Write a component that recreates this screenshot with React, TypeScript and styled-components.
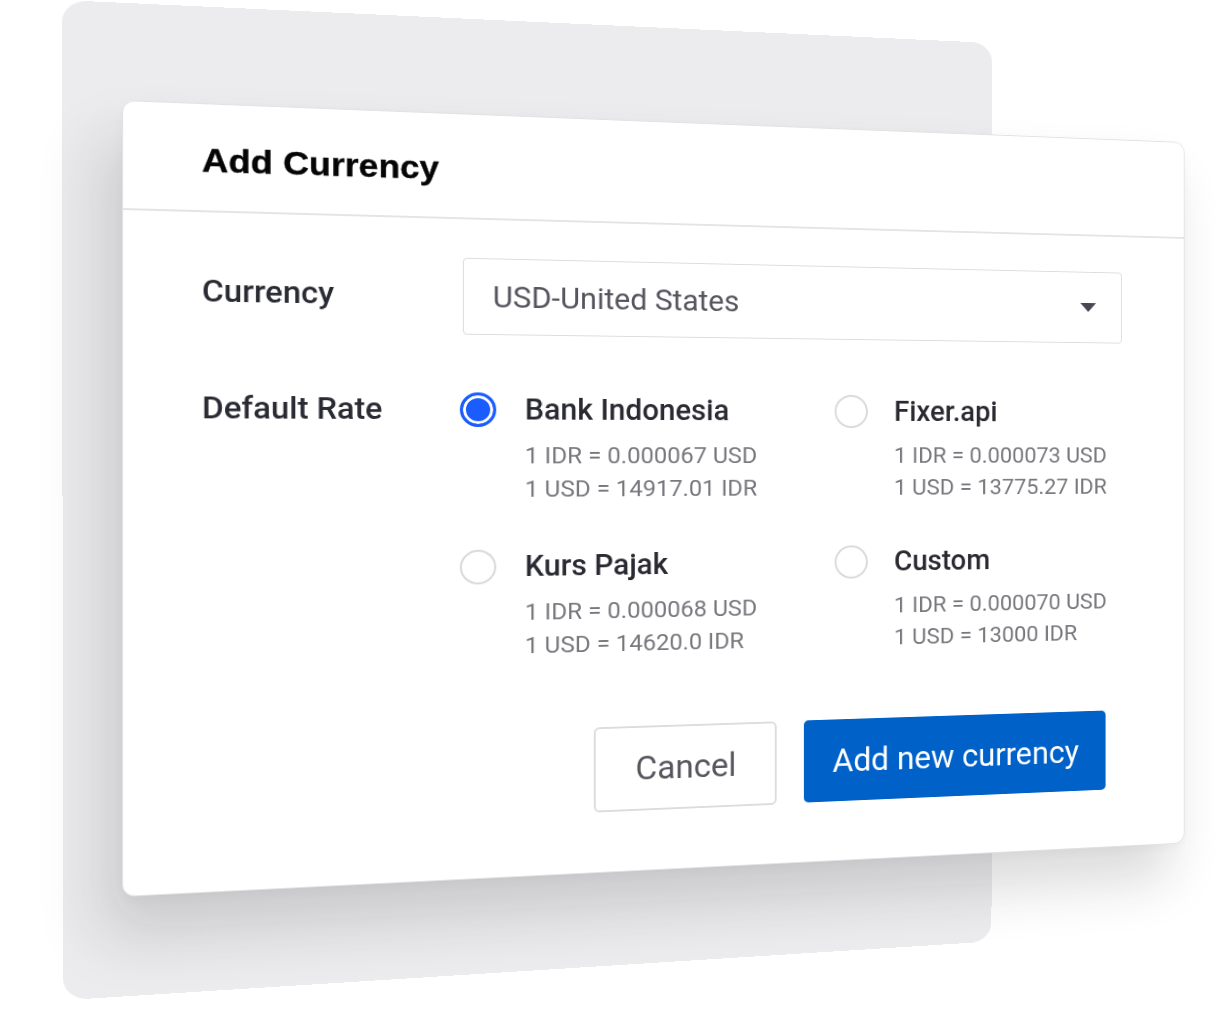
import React from "react";
import styled, { createGlobalStyle } from "styled-components";

const GlobalStyle = createGlobalStyle`
  html, body {
    margin: 0;
    padding: 0;
    background: #ffffff;
  }
  body {
    font-family: Roboto, "Noto Sans", Arial, sans-serif;
  }
`;

type Pt = [number, number];

// projects a w x h box onto a quad given as tl, tr, br, bl
const quadMatrix = (w: number, h: number, q: Pt[]) => {
  const [[x0, y0], [x1, y1], [x2, y2], [x3, y3]] = q;
  const dx1 = x1 - x2;
  const dx2 = x3 - x2;
  const dx3 = x0 - x1 + x2 - x3;
  const dy1 = y1 - y2;
  const dy2 = y3 - y2;
  const dy3 = y0 - y1 + y2 - y3;
  const den = dx1 * dy2 - dx2 * dy1;
  const g = (dx3 * dy2 - dx2 * dy3) / den;
  const k = (dx1 * dy3 - dx3 * dy1) / den;
  const a = x1 - x0 + g * x1;
  const b = x3 - x0 + k * x3;
  const d = y1 - y0 + g * y1;
  const e = y3 - y0 + k * y3;
  const m = [a / w, d / w, 0, g / w, b / h, e / h, 0, k / h, 0, 0, 1, 0, x0, y0, 0, 1];
  return `matrix3d(${m.map((n) => n.toFixed(6)).join(",")})`;
};

const PANEL_W = 930;
const PANEL_H = 1000;
const CARD_W = 1100;
const CARD_H = 797;

const panelMatrix = quadMatrix(PANEL_W, PANEL_H, [
  [62, 0],
  [992, 43],
  [991, 941],
  [63, 1000],
]);

const cardMatrix = quadMatrix(CARD_W, CARD_H, [
  [122, 100],
  [1184, 142],
  [1184, 843],
  [122, 897],
]);

const Stage = styled.div`
  width: 1226px;
  height: 1020px;
  overflow: hidden;
  display: grid;
  background: #ffffff;
`;

const Panel = styled.div<{ $matrix: string }>`
  grid-area: 1 / 1;
  align-self: start;
  justify-self: start;
  width: ${PANEL_W}px;
  height: ${PANEL_H}px;
  background: #ececee;
  border-radius: 22px;
  transform-origin: 0 0;
  transform: ${(p) => p.$matrix};
`;

const Card = styled.div<{ $matrix: string }>`
  grid-area: 1 / 1;
  align-self: start;
  justify-self: start;
  width: ${CARD_W}px;
  height: ${CARD_H}px;
  box-sizing: border-box;
  background: #ffffff;
  border: 1.5px solid #e2e2e6;
  border-radius: 12px;
  box-shadow: -18px 40px 60px rgba(30, 30, 40, 0.16), 0 4px 14px rgba(0, 0, 0, 0.04);
  transform-origin: 0 0;
  transform: ${(p) => p.$matrix};
  display: flex;
  flex-direction: column;
`;

const Header = styled.div`
  height: 109px;
  box-sizing: border-box;
  border-bottom: 2px solid #e4e4e7;
  padding: 6px 0 0 72.5px;
  display: flex;
  align-items: center;
`;

const Title = styled.h1`
  margin: 0;
  font-family: "Liberation Sans", Arial, sans-serif;
  font-size: 34px;
  font-weight: 700;
  letter-spacing: 0.1px;
  color: #050505;
  -webkit-text-stroke: 0.4px #050505;
`;

const Body = styled.div`
  padding: 40px 72px 0 72.5px;
  display: flex;
  flex-direction: column;
`;

const FieldRow = styled.div`
  display: grid;
  grid-template-columns: 249px 1fr;
  align-items: center;
`;

const Label = styled.div`
  font-size: 31px;
  font-weight: 500;
  line-height: 36px;
  color: #2a2a33;
`;

const Select = styled.div`
  height: 80px;
  box-sizing: border-box;
  border: 1.5px solid #dcdce0;
  border-radius: 4px;
  padding: 0 29px 0 29px;
  display: flex;
  align-items: center;
  justify-content: space-between;
`;

const SelectText = styled.span`
  font-size: 31px;
  color: #55555f;
`;

const RateRow = styled.div`
  display: grid;
  grid-template-columns: 246px 1fr;
  align-items: start;
  margin-top: 60px;
`;

const Options = styled.div`
  display: grid;
  grid-template-columns: 386px 1fr;
  row-gap: 46px;
`;

const Option = styled.div`
  display: flex;
  align-items: flex-start;
  gap: 29px;
`;

const Radio = styled.span<{ $checked?: boolean }>`
  flex: none;
  width: 36px;
  height: 36px;
  box-sizing: border-box;
  border-radius: 50%;
  border: ${(p) => (p.$checked ? "3px solid #1b5cff" : "2px solid #d9d9dd")};
  background: ${(p) => (p.$checked ? "#1b5cff" : "#ffffff")};
  box-shadow: ${(p) => (p.$checked ? "inset 0 0 0 3px #ffffff" : "none")};
`;

const OptionText = styled.div`
  display: flex;
  flex-direction: column;
`;

const OptionTitle = styled.div`
  font-size: 30.5px;
  font-weight: 500;
  line-height: 36px;
  color: #2a2a33;
`;

const Rates = styled.div`
  margin-top: 12px;
`;

const RateLine = styled.div`
  font-size: 24.5px;
  line-height: 35px;
  color: #77777d;
  white-space: nowrap;
`;

const Actions = styled.div`
  display: flex;
  justify-content: flex-end;
  gap: 29px;
  margin-top: 71px;
  padding-right: 19px;
`;

const Button = styled.button<{ $primary?: boolean }>`
  font-family: Roboto, "Noto Sans", Arial, sans-serif;
  box-sizing: border-box;
  height: ${(p) => (p.$primary ? "89px" : "90px")};
  width: ${(p) => (p.$primary ? "335px" : "190px")};
  border-radius: ${(p) => (p.$primary ? "5px" : "6px")};
  border: ${(p) => (p.$primary ? "none" : "2px solid #dcdce0")};
  background: ${(p) => (p.$primary ? "#0061c8" : "#ffffff")};
  color: ${(p) => (p.$primary ? "#ffffff" : "#56565e")};
  font-size: 34.5px;
  padding: 0;
  cursor: pointer;
`;

const Caret = () => (
  <svg width="18" height="10" viewBox="0 0 18 10">
    <path d="M0 0 L18 0 L9 10 Z" fill="#484852" />
  </svg>
);

const options = [
  { name: "Bank Indonesia", idr: "0.000067", usd: "14917.01", checked: true },
  { name: "Fixer.api", idr: "0.000073", usd: "13775.27" },
  { name: "Kurs Pajak", idr: "0.000068", usd: "14620.0" },
  { name: "Custom", idr: "0.000070", usd: "13000" },
];

export default function App() {
  return (
    <>
      <GlobalStyle />
      <Stage>
        <Panel $matrix={panelMatrix} />
        <Card $matrix={cardMatrix}>
          <Header>
            <Title>Add Currency</Title>
          </Header>
          <Body>
            <FieldRow>
              <Label>Currency</Label>
              <Select>
                <SelectText>USD-United States</SelectText>
                <Caret />
              </Select>
            </FieldRow>
            <RateRow>
              <Label>Default Rate</Label>
              <Options>
                {options.map((o) => (
                  <Option key={o.name}>
                    <Radio $checked={o.checked} />
                    <OptionText>
                      <OptionTitle>{o.name}</OptionTitle>
                      <Rates>
                        <RateLine>1 IDR = {o.idr} USD</RateLine>
                        <RateLine>1 USD = {o.usd} IDR</RateLine>
                      </Rates>
                    </OptionText>
                  </Option>
                ))}
              </Options>
            </RateRow>
            <Actions>
              <Button>Cancel</Button>
              <Button $primary>Add new currency</Button>
            </Actions>
          </Body>
        </Card>
      </Stage>
    </>
  );
}
